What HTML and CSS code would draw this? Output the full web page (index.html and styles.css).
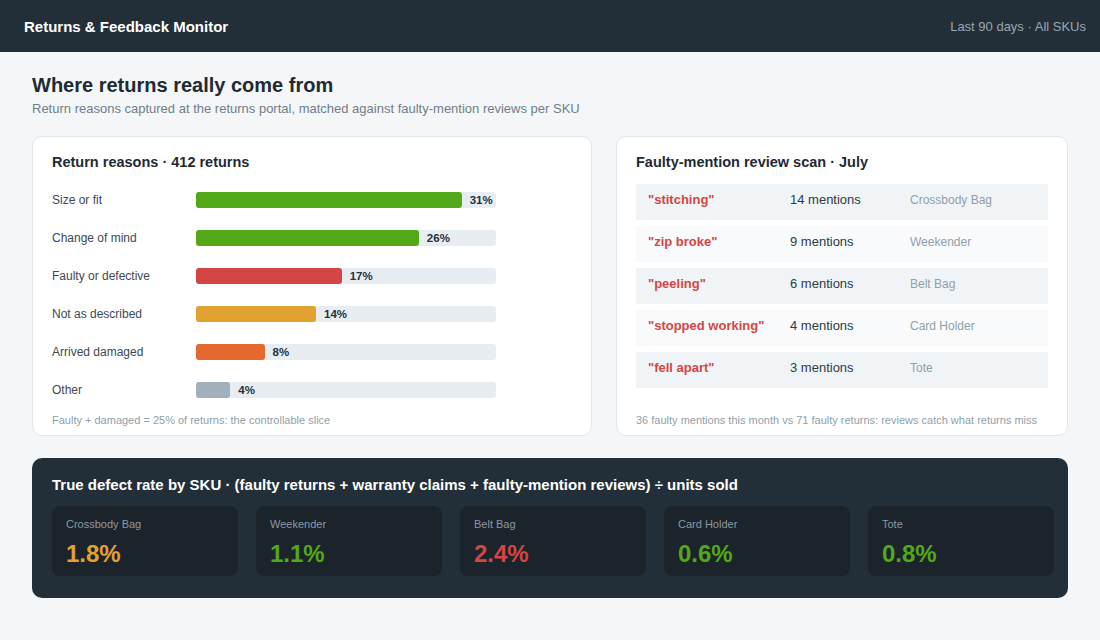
FILE: index.html
```html
<!DOCTYPE html>
<html lang="en">
<head>
  <meta charset="UTF-8" />
  <title>Returns &amp; Feedback Monitor</title>
  <meta name="viewport" content="width=device-width, initial-scale=1.0" />
  <link rel="stylesheet" href="styles.css">
</head>
<body>
  <div class="topbar">
    <div class="brand">Returns &amp; Feedback Monitor</div>
    <div class="scope">Last 90 days · All SKUs</div>
  </div>

  <div class="page">
    <h1>Where returns really come from</h1>
    <p class="lead">Return reasons captured at the returns portal, matched against faulty-mention reviews per SKU</p>

    <div class="columns">
      <div class="card">
        <h2>Return reasons · 412 returns</h2>
        <div class="reasons">
          <div class="reason">
            <span class="reason-name">Size or fit</span>
            <div class="track"><div class="fill green" style="width: 88.57%"></div><span class="pct">31%</span></div>
          </div>
          <div class="reason">
            <span class="reason-name">Change of mind</span>
            <div class="track"><div class="fill green" style="width: 74.29%"></div><span class="pct">26%</span></div>
          </div>
          <div class="reason">
            <span class="reason-name">Faulty or defective</span>
            <div class="track"><div class="fill red" style="width: 48.57%"></div><span class="pct">17%</span></div>
          </div>
          <div class="reason">
            <span class="reason-name">Not as described</span>
            <div class="track"><div class="fill amber" style="width: 40%"></div><span class="pct">14%</span></div>
          </div>
          <div class="reason">
            <span class="reason-name">Arrived damaged</span>
            <div class="track"><div class="fill orange" style="width: 22.86%"></div><span class="pct">8%</span></div>
          </div>
          <div class="reason">
            <span class="reason-name">Other</span>
            <div class="track"><div class="fill gray" style="width: 11.43%"></div><span class="pct">4%</span></div>
          </div>
        </div>
        <p class="note">Faulty + damaged = 25% of returns: the controllable slice</p>
      </div>

      <div class="card">
        <h2>Faulty-mention review scan · July</h2>
        <div class="mentions">
          <div class="mention">
            <span class="phrase">"stitching"</span>
            <span class="count">14 mentions</span>
            <span class="sku">Crossbody Bag</span>
          </div>
          <div class="mention">
            <span class="phrase">"zip broke"</span>
            <span class="count">9 mentions</span>
            <span class="sku">Weekender</span>
          </div>
          <div class="mention">
            <span class="phrase">"peeling"</span>
            <span class="count">6 mentions</span>
            <span class="sku">Belt Bag</span>
          </div>
          <div class="mention">
            <span class="phrase">"stopped working"</span>
            <span class="count">4 mentions</span>
            <span class="sku">Card Holder</span>
          </div>
          <div class="mention">
            <span class="phrase">"fell apart"</span>
            <span class="count">3 mentions</span>
            <span class="sku">Tote</span>
          </div>
        </div>
        <p class="note">36 faulty mentions this month vs 71 faulty returns: reviews catch what returns miss</p>
      </div>
    </div>

    <div class="defects">
      <h2>True defect rate by SKU · (faulty returns + warranty claims + faulty-mention reviews) ÷ units sold</h2>
      <div class="tiles">
        <div class="tile">
          <span class="tile-name">Crossbody Bag</span>
          <span class="rate amber">1.8%</span>
        </div>
        <div class="tile">
          <span class="tile-name">Weekender</span>
          <span class="rate green">1.1%</span>
        </div>
        <div class="tile">
          <span class="tile-name">Belt Bag</span>
          <span class="rate red">2.4%</span>
        </div>
        <div class="tile">
          <span class="tile-name">Card Holder</span>
          <span class="rate green">0.6%</span>
        </div>
        <div class="tile">
          <span class="tile-name">Tote</span>
          <span class="rate green">0.8%</span>
        </div>
      </div>
    </div>
  </div>
</body>
</html>
```

FILE: styles.css
```css
:root {
  --ink: #1f2a33;
  --muted: #6f7e89;
  --faint: #909fa9;
  --navy: #232f38;
  --navy-deep: #1b242b;
  --green: #53a818;
  --red: #d64545;
  --amber: #e1a232;
  --orange: #e4692e;
  --slate: #a2b0bb;
  --track: #e8edf1;
}

* {
  box-sizing: border-box;
}

body {
  font-family: 'Liberation Sans', Arial, sans-serif;
  background-color: #f4f6f8;
  margin: 0;
  padding: 0;
  color: var(--ink);
}

.topbar {
  background-color: var(--navy);
  height: 52px;
  display: flex;
  align-items: center;
  justify-content: space-between;
  padding: 0 14px 0 24px;
}

.brand {
  color: white;
  font-weight: bold;
  font-size: 15px;
}

.scope {
  color: #9aa7b1;
  font-size: 13px;
}

.page {
  padding: 20px 32px 32px;
}

h1 {
  margin: 0;
  font-size: 20px;
  line-height: 26px;
}

.lead {
  margin: 3px 0 0;
  font-size: 13px;
  color: var(--muted);
}

.columns {
  display: grid;
  grid-template-columns: 560px 1fr;
  gap: 24px;
  margin-top: 20px;
}

.card {
  background: white;
  border: 1px solid #e2e7eb;
  border-radius: 10px;
  padding: 15px 19px 9px;
  height: 300px;
  display: flex;
  flex-direction: column;
}

.card h2 {
  margin: 0;
  font-size: 14.5px;
  line-height: 20px;
}

.reasons {
  margin-top: 20px;
  display: flex;
  flex-direction: column;
  gap: 22px;
}

.reason {
  display: flex;
  align-items: center;
  height: 16px;
}

.reason-name {
  width: 144px;
  font-size: 12px;
  color: #3d4a54;
}

.track {
  width: 300px;
  height: 16px;
  background: var(--track);
  border-radius: 3px;
  display: flex;
  align-items: center;
}

.fill {
  height: 100%;
  border-radius: 3px;
}

.fill.green { background: var(--green); }
.fill.red { background: var(--red); }
.fill.amber { background: var(--amber); }
.fill.orange { background: var(--orange); }
.fill.gray { background: var(--slate); }

.pct {
  margin-left: 8px;
  font-size: 11.5px;
  font-weight: bold;
  color: #26313a;
}

.note {
  margin: auto 0 0;
  font-size: 11px;
  color: var(--faint);
}

.mentions {
  margin-top: 12px;
  display: flex;
  flex-direction: column;
  gap: 6px;
}

.mention {
  height: 36px;
  display: flex;
  align-items: flex-start;
  padding: 8px 0 0 12px;
  line-height: 16px;
  background: #f8fafc;
}

.mention:nth-child(odd) {
  background: #f1f4f7;
}

.phrase {
  width: 142px;
  font-size: 13px;
  font-weight: bold;
  color: var(--red);
}

.count {
  width: 120px;
  font-size: 13px;
  color: #2f3b45;
}

.sku {
  font-size: 12px;
  color: var(--faint);
}

.defects {
  margin-top: 22px;
  background: var(--navy);
  border-radius: 10px;
  padding: 17px 20px 22px;
}

.defects h2 {
  margin: 0;
  color: white;
  font-size: 15px;
  line-height: 20px;
}

.tiles {
  display: grid;
  grid-template-columns: repeat(5, 186px);
  gap: 18px;
  margin-top: 11px;
}

.tile {
  background: var(--navy-deep);
  border-radius: 8px;
  height: 70px;
  padding: 12px 14px;
  display: flex;
  flex-direction: column;
}

.tile-name {
  font-size: 11px;
  color: #8b98a2;
}

.rate {
  margin-top: 11px;
  font-size: 24px;
  line-height: 26px;
  font-weight: bold;
}

.rate.green { color: var(--green); }
.rate.red { color: var(--red); }
.rate.amber { color: var(--amber); }
```
